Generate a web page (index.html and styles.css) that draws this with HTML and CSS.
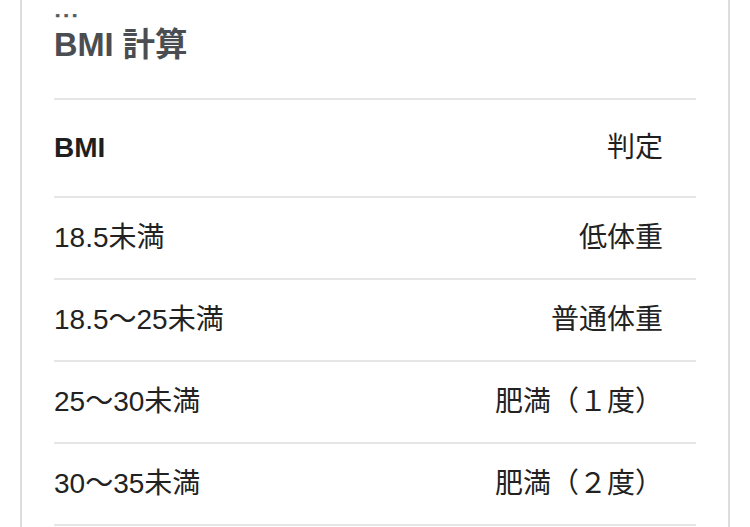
FILE: index.html
```html
<!DOCTYPE html>
<html lang="ja">
<head>
<meta charset="utf-8">
<title>BMI 計算</title>
<link rel="stylesheet" href="styles.css">
</head>
<body>
<div class="page">
  <section class="card">
    <div class="dots">...</div>
    <h2 class="title">BMI 計算</h2>
    <table class="bmi">
      <thead>
        <tr><th class="c-left">BMI</th><th class="c-right">判定</th></tr>
      </thead>
      <tbody>
        <tr><td class="c-left">18.5未満</td><td class="c-right">低体重</td></tr>
        <tr><td class="c-left">18.5〜25未満</td><td class="c-right">普通体重</td></tr>
        <tr><td class="c-left">25〜30未満</td><td class="c-right">肥満（１度）</td></tr>
        <tr><td class="c-left">30〜35未満</td><td class="c-right">肥満（２度）</td></tr>
      </tbody>
    </table>
  </section>
</div>
</body>
</html>
```
FILE: styles.css
```css
html, body {
  margin: 0;
  padding: 0;
  background: #ffffff;
}
body {
  font-family: "Liberation Sans", "Noto Sans CJK JP", sans-serif;
  color: #222222;
  overflow: hidden;
}
.page {
  padding: 0 20px;
  width: 710px;
}
.card {
  border-left: 2px solid #dcdce1;
  border-right: 2px solid #dcdce1;
  padding: 0 32px;
  min-height: 527px;
}
.dots {
  font-size: 19px;
  font-weight: bold;
  line-height: 22px;
  height: 22px;
  padding-left: 1px;
  color: #55585c;
  letter-spacing: 3.2px;
  -webkit-text-stroke: 0.7px #55585c;
}
.title {
  margin: 3px 0 0;
  font-size: 32.5px;
  line-height: 40px;
  font-weight: bold;
  color: #4a4d52;
  padding-bottom: 33px;
}
.bmi {
  width: 100%;
  border-collapse: separate;
  border-spacing: 0;
  border-top: 2px solid #e6e6e6;
  font-size: 28px;
  line-height: 36px;
}
.bmi th, .bmi td {
  padding: 0;
  border-bottom: 2px solid #e6e6e6;
  vertical-align: middle;
  white-space: nowrap;
}
.bmi th {
  height: 96px;
  font-weight: normal;
  color: #1f1f1f;
}
.bmi th.c-left {
  font-weight: bold;
}
.bmi td {
  height: 80px;
  color: #222222;
}
.c-left {
  text-align: left;
}
.c-right {
  text-align: right;
  padding-right: 33px !important;
}
```
